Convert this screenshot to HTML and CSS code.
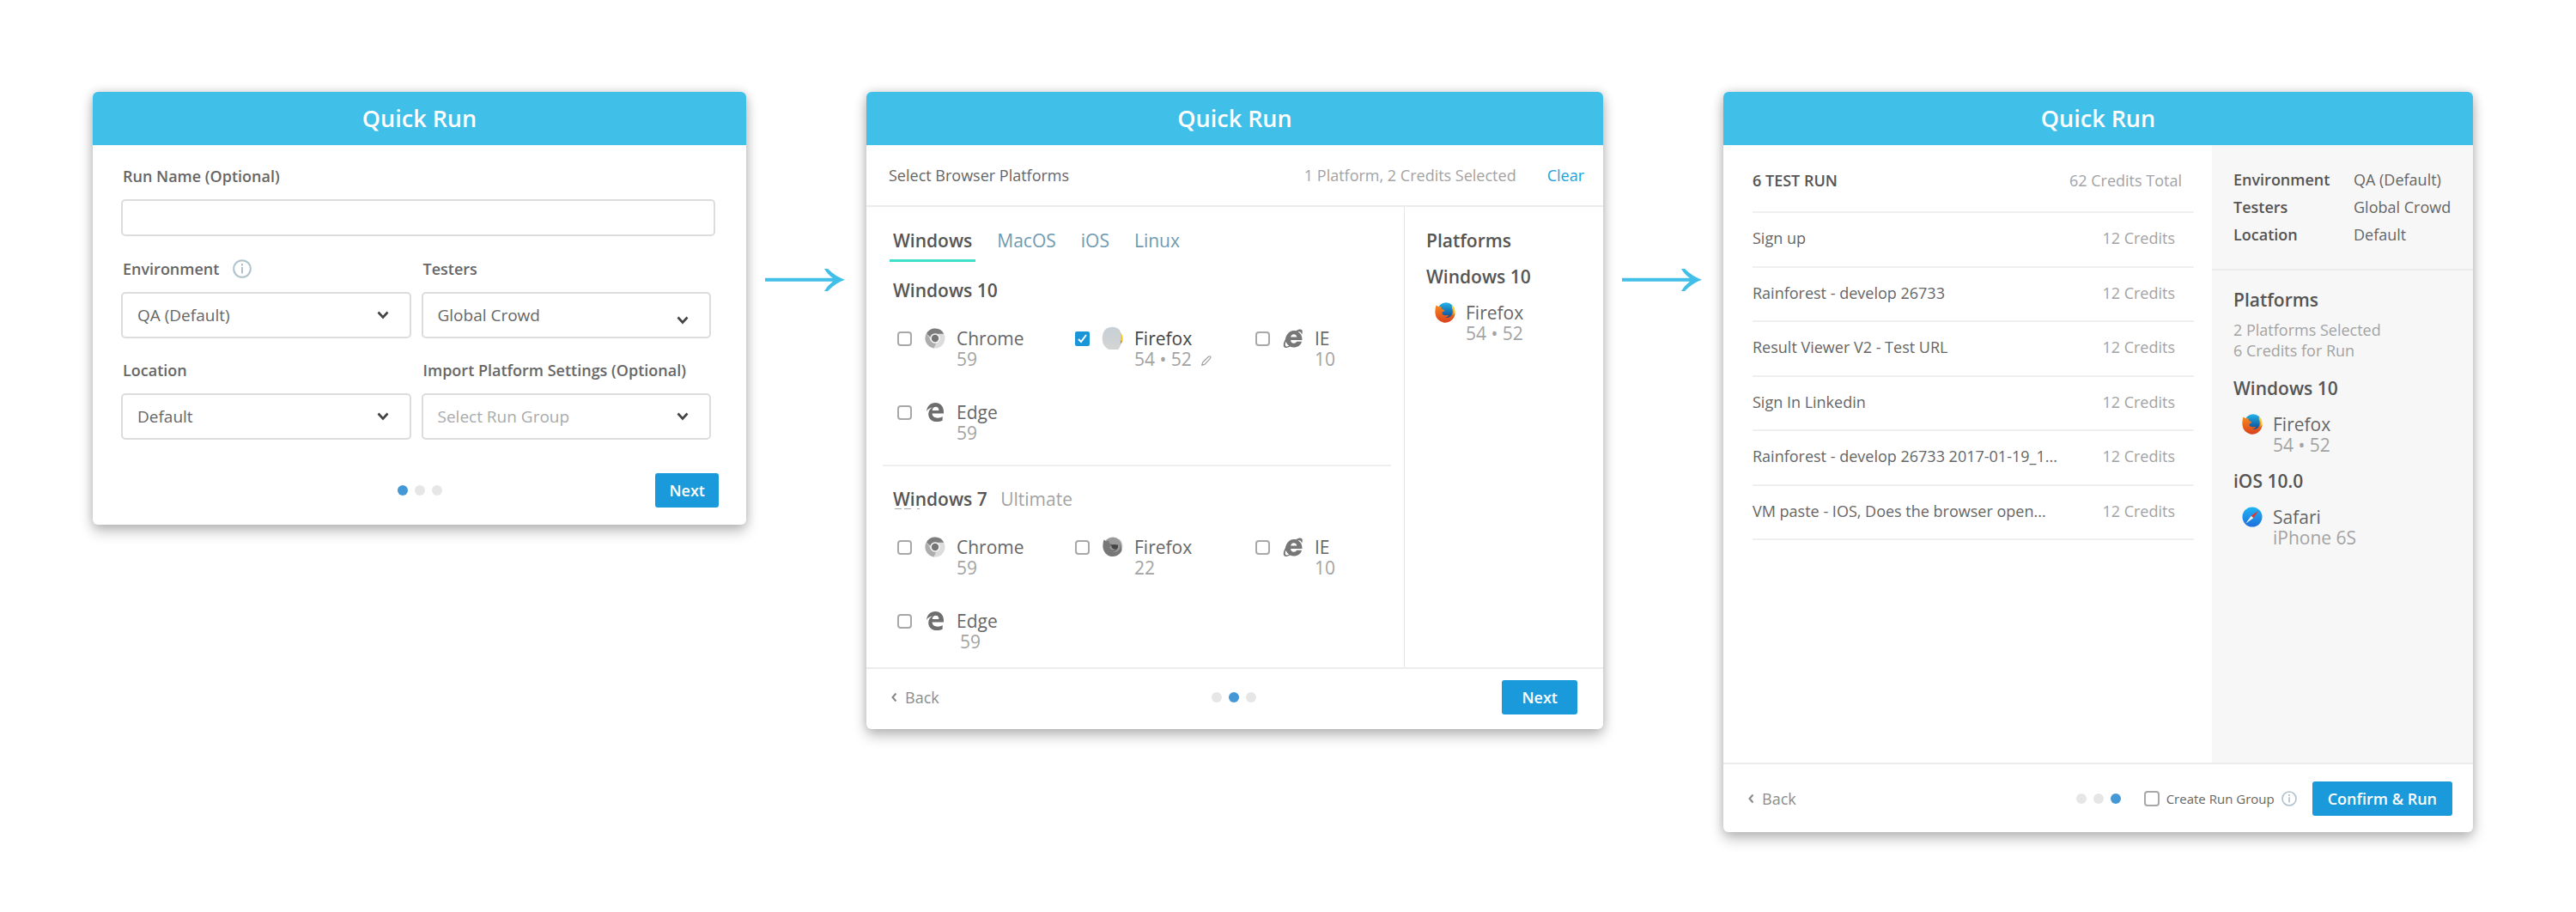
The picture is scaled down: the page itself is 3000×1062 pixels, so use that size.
FILE: index.html
```html
<!DOCTYPE html>
<html lang="en">
<head>
<meta charset="utf-8">
<title>Quick Run</title>
<link rel="stylesheet" href="styles.css">
</head>
<body>
<svg class="sprite" aria-hidden="true">
  <defs>
    <linearGradient id="globe" x1="0" y1="0" x2="0" y2="1"><stop offset="0" stop-color="#23b3ea"/><stop offset="1" stop-color="#0b3f8c"/></linearGradient>
    <linearGradient id="fur" x1="0" y1="0" x2="0" y2="1"><stop offset="0" stop-color="#f68a1e"/><stop offset="1" stop-color="#d9401c"/></linearGradient>
    <linearGradient id="sky" x1="0" y1="0" x2="0" y2="1"><stop offset="0" stop-color="#1fb4f4"/><stop offset="1" stop-color="#1d6fdc"/></linearGradient>
    <linearGradient id="mist" x1="0" y1="0" x2="0" y2="1"><stop offset="0" stop-color="#c6d0d6"/><stop offset="1" stop-color="#d4d4d4"/></linearGradient>
    <symbol id="chrome" viewBox="0 0 24 24">
      <circle cx="12" cy="12" r="11.500" fill="#dcdcdc"/>
      <path d="M2 6.300A11.500 11.500 0 0 1 22.200 6.700H12A5.500 5.500 0 0 0 6.600 11z" fill="#7d7d7d"/>
      <path d="M2 6.300 7.200 14.600a5.500 5.500 0 0 0 6 2.800L10.500 23.400A11.500 11.500 0 0 1 2 6.300z" fill="#adadad"/>
      <circle cx="12" cy="12" r="5.800" fill="#f6f6f6"/>
      <circle cx="12" cy="12" r="4.200" fill="#757575"/>
    </symbol>
    <symbol id="edge" viewBox="0 0 24 24">
      <path d="M2 10.900C2.700 4.800 6.700 1 12.300 1 18.300 1 22 5.300 22 11.300v2.300H8.600c.1 3.700 3.200 5.100 6.400 5.100 2.200 0 4-.6 5.700-1.600v4.500c-1.900 1-4.100 1.500-6.700 1.500-6 0-9.800-3.600-9.800-8.800 0-3.700 1.900-6.500 5-8.100C5.800 7 3.400 8.500 2 10.900zM8.700 10h7.700c0-2.800-1.400-4.200-3.700-4.200-2.300 0-3.800 1.600-4 4.200z" fill="#6e6e6e"/>
    </symbol>
    <symbol id="ie" viewBox="0 0 24 24">
      <path d="M22.500 13.900H9.100c.1 2.300 1.500 3.800 3.700 3.800 1.600 0 2.700-.7 3.300-2h6c-1.300 4.300-4.800 6.800-9.400 6.800-1.700 0-3.200-.3-4.500-1-3 1.700-5.500 2-6.700.7-1.400-1.600-.8-5 1.300-8.900C3.900 7.200 7.600 3 12.700 2.900c1 0 1.900.1 2.700.3C18 1.600 20.600.9 22 2.100c1.200 1.100 1 3.300 0 5.900-.2-2.500-1.600-4.300-4.400-3.600 3.300 1.700 5.100 5 4.900 9.500zM9.200 10.500h7.100c-.2-2-1.500-3.300-3.500-3.300s-3.400 1.300-3.600 3.300zM3.500 16c-1.100 2.600-1 4.700.2 5.200.8.400 2.100.1 3.500-.7A10 10 0 0 1 3.500 16z" fill="#777" fill-rule="evenodd"/>
    </symbol>
    <symbol id="firefox" viewBox="0 0 24 24">
      <path d="M19.500 3.500c3 2.500 4.500 6 4 10A12 12 0 0 1 20 20z" fill="#fbd22f"/>
      <circle cx="13" cy="10" r="9.800" fill="url(#globe)"/>
      <path d="M1.500 3.600 4.600 5.200 7 4.600 8.200 8l3.300 1-.8 1.600-2.500 1.400c.5 2.600 3 4 5.800 3l2.500.3c-1.500 1.700-3 2-4.500 2.200 4.600 1.200 8.600-1.600 8.500-6.800l-.8-4.500c3.200 2.600 4.300 6.200 3.300 9.900A11.600 11.600 0 0 1 .5 13C.2 9.500.6 6.500 1.500 3.600z" fill="url(#fur)"/>
      <path d="M20 6.500c2 2.700 2.300 6 1 9 1.800-1.600 2.700-4.300 2.200-7C22.700 6 21.500 4.300 19.500 3.200z" fill="#fbd22f"/>
    </symbol>
    <symbol id="firefox-gray" viewBox="0 0 24 24">
      <path d="M19.500 2.500c3 2.500 4.500 6 4 10A12 12 0 0 1 20 20z" fill="#d9d9d9"/>
      <circle cx="12" cy="11" r="10.500" fill="#9a9a9a"/>
      <path d="M1.500 3.600 4.600 5.200 7 4.600 8.200 8l3.300 1-.8 1.600-2.500 1.400c.5 2.600 3 4 5.800 3l2.500.3c-1.500 1.700-3 2-4.500 2.200 4.600 1.200 8.600-1.600 8.500-6.800l-.8-2.500c2.200 2.600 3.300 5.200 2.300 8.900A11.500 11.500 0 0 1 .5 13C.2 9.500.6 6.500 1.500 3.600z" fill="#777"/>
      <path d="M10 9.500c3-1 5-.5 8 0 .5 4-1 6-5 6.500l3-1.500c-3 0-5-.5-5.500-2.500z" fill="#454545"/>
    </symbol>
    <symbol id="firefox-mist" viewBox="0 0 28 28">
      <path d="M22 6c3 3 4.500 8 3 12l-3 4z" fill="#f7c61e"/>
      <path d="M23 16l1.500 1.500L22 23z" fill="#d9532c"/>
      <path d="M5 4C10-.5 18-.3 22 4.500 23.500 9 24 16 22.500 23l-2 4H9C4 24 1.500 20 1.800 13 2 9 3 6 5 4z" fill="url(#mist)"/>
    </symbol>
    <symbol id="safari" viewBox="0 0 24 24">
      <circle cx="12" cy="12" r="11.500" fill="url(#sky)"/>
      <path d="M19.500 4.500 10.700 10.700l2.600 2.600z" fill="#e8352b"/>
      <path d="M4.500 19.500 10.700 10.700l2.600 2.600z" fill="#eef3f8"/>
    </symbol>
    <symbol id="info" viewBox="0 0 22 22">
      <circle cx="11" cy="11" r="9.800" fill="none" stroke="#b0c3cd" stroke-width="2"/>
      <path d="M10 5h2v2.400h-2zM10 9h2v7.500h-2z" fill="#b0c3cd"/>
    </symbol>
    <symbol id="arrow" viewBox="0 0 96 28">
      <path d="M69 1h4q9 9 20 12.700Q82 17.500 73 27h-4q4-7 10-11.300H0v-4h79Q73 8 69 1z" fill="#41bfe8"/>
    </symbol>
    <symbol id="pencil" viewBox="0 0 12 12">
      <path d="M.8 11.200 1.600 8 8.500 1.200q1.200-.8 2 0t0 2.100L3.800 10.400z" fill="none" stroke="#a0a0a0" stroke-width="1.200"/>
    </symbol>
    <symbol id="back" viewBox="0 0 8 12">
      <path d="M6.500 1.500 2.500 6l4 4.500" fill="none" stroke="#888" stroke-width="2"/>
    </symbol>
  </defs>
</svg>

<main class="flow">
  <form class="card card-setup">
    <h2 class="card-title">Quick Run</h2>
    <div class="setup">
      <div class="field">
        <label class="label" for="run-name">Run Name (Optional)</label>
        <input class="text-input" id="run-name" type="text">
      </div>
      <div class="field-grid">
        <div class="field">
          <label class="label" for="env">Environment <svg class="info"><use href="#info"/></svg></label>
          <select class="select" id="env"><option>QA (Default)</option></select>
        </div>
        <div class="field">
          <label class="label" for="testers">Testers</label>
          <select class="select select-low" id="testers"><option>Global Crowd</option></select>
        </div>
        <div class="field">
          <label class="label" for="location">Location</label>
          <select class="select" id="location"><option>Default</option></select>
        </div>
        <div class="field">
          <label class="label" for="import">Import Platform Settings (Optional)</label>
          <select class="select select-empty" id="import"><option>Select Run Group</option></select>
        </div>
      </div>
    </div>
    <footer class="footer footer-plain">
      <div class="dots"><i class="dot dot-on"></i><i class="dot"></i><i class="dot"></i></div>
      <div class="footer-end"><button class="btn" type="button">Next</button></div>
    </footer>
  </form>

  <svg class="arrow"><use href="#arrow"/></svg>

  <form class="card card-platforms">
    <h2 class="card-title">Quick Run</h2>
    <div class="toolbar">
      <span class="toolbar-title">Select Browser Platforms</span>
      <span class="toolbar-count">1 Platform, 2 Credits Selected</span>
      <a class="clear" href="#">Clear</a>
    </div>
    <div class="picker">
      <div class="picker-main">
        <nav class="tabs">
          <a class="tab tab-on" href="#">Windows</a>
          <a class="tab" href="#">MacOS</a>
          <a class="tab" href="#">iOS</a>
          <a class="tab" href="#">Linux</a>
        </nav>
        <section class="os">
          <h3 class="os-title">Windows 10</h3>
          <div class="browsers">
            <label class="browser"><input class="check" type="checkbox"><svg class="logo"><use href="#chrome"/></svg><span class="name">Chrome</span><span class="version">59</span></label>
            <label class="browser"><input class="check" type="checkbox" checked><svg class="logo logo-lg"><use href="#firefox-mist"/></svg><span class="name name-on">Firefox</span><span class="version">54 • 52 <svg class="pencil"><use href="#pencil"/></svg></span></label>
            <label class="browser"><input class="check" type="checkbox"><svg class="logo"><use href="#ie"/></svg><span class="name">IE</span><span class="version">10</span></label>
            <label class="browser"><input class="check" type="checkbox"><svg class="logo"><use href="#edge"/></svg><span class="name">Edge</span><span class="version">59</span></label>
          </div>
        </section>
        <section class="os">
          <h3 class="os-title"><span class="dashed">Windows 7</span> <span class="edition">Ultimate</span></h3>
          <div class="browsers">
            <label class="browser"><input class="check" type="checkbox"><svg class="logo"><use href="#chrome"/></svg><span class="name">Chrome</span><span class="version">59</span></label>
            <label class="browser"><input class="check" type="checkbox"><svg class="logo"><use href="#firefox-gray"/></svg><span class="name">Firefox</span><span class="version">22</span></label>
            <label class="browser"><input class="check" type="checkbox"><svg class="logo"><use href="#ie"/></svg><span class="name">IE</span><span class="version">10</span></label>
            <label class="browser"><input class="check" type="checkbox"><svg class="logo"><use href="#edge"/></svg><span class="name">Edge</span><span class="version version-in">59</span></label>
          </div>
        </section>
      </div>
      <aside class="picker-side">
        <h3 class="side-title">Platforms</h3>
        <h4 class="side-os">Windows 10</h4>
        <div class="chosen"><svg class="logo"><use href="#firefox"/></svg><span class="name">Firefox</span><span class="version">54 • 52</span></div>
      </aside>
    </div>
    <footer class="footer">
      <a class="back" href="#"><svg class="back-icon"><use href="#back"/></svg>Back</a>
      <div class="dots"><i class="dot"></i><i class="dot dot-on"></i><i class="dot"></i></div>
      <div class="footer-end"><button class="btn btn-wide" type="button">Next</button></div>
    </footer>
  </form>

  <svg class="arrow"><use href="#arrow"/></svg>

  <form class="card card-confirm">
    <h2 class="card-title">Quick Run</h2>
    <div class="summary">
      <div class="tests">
        <table class="table">
          <thead><tr><th class="tests-head">6 TEST RUN</th><th class="total">62 Credits Total</th></tr></thead>
          <tbody>
            <tr><td>Sign up</td><td class="credits">12 Credits</td></tr>
            <tr><td>Rainforest - develop 26733</td><td class="credits">12 Credits</td></tr>
            <tr><td>Result Viewer V2 - Test URL</td><td class="credits">12 Credits</td></tr>
            <tr><td>Sign In Linkedin</td><td class="credits">12 Credits</td></tr>
            <tr><td>Rainforest - develop 26733 2017-01-19_1...</td><td class="credits">12 Credits</td></tr>
            <tr><td>VM paste - IOS, Does the browser open...</td><td class="credits">12 Credits</td></tr>
          </tbody>
        </table>
      </div>
      <aside class="summary-side">
        <dl class="facts">
          <dt>Environment</dt><dd>QA (Default)</dd>
          <dt>Testers</dt><dd>Global Crowd</dd>
          <dt>Location</dt><dd>Default</dd>
        </dl>
        <div class="chosen-list">
          <h3 class="side-title">Platforms</h3>
          <p class="note">2 Platforms Selected<br>6 Credits for Run</p>
          <h4 class="side-os">Windows 10</h4>
          <div class="chosen"><svg class="logo"><use href="#firefox"/></svg><span class="name">Firefox</span><span class="version">54 • 52</span></div>
          <h4 class="side-os">iOS 10.0</h4>
          <div class="chosen"><svg class="logo"><use href="#safari"/></svg><span class="name">Safari</span><span class="version">iPhone 6S</span></div>
        </div>
      </aside>
    </div>
    <footer class="footer footer-tall">
      <a class="back" href="#"><svg class="back-icon"><use href="#back"/></svg>Back</a>
      <div class="dots"><i class="dot"></i><i class="dot"></i><i class="dot dot-on"></i></div>
      <div class="footer-end">
        <label class="group"><input class="check check-lg" type="checkbox">Create Run Group <svg class="info info-sm"><use href="#info"/></svg></label>
        <button class="btn btn-run" type="button">Confirm &amp; Run</button>
      </div>
    </footer>
  </form>
</main>
</body>
</html>
```
FILE: styles.css
```css
* { box-sizing: border-box; }

body {
  margin: 0;
  background: #fff;
  color: #666;
  font-family: "Open Sans", "Noto Sans", sans-serif;
  font-size: 18px;
  line-height: 24px;
}

h2, h3, h4, p, dl, dd { margin: 0; }
a { text-decoration: none; }
button, input, select { font: inherit; }

.sprite { position: absolute; width: 0; height: 0; }

.flow {
  display: flex;
  align-items: flex-start;
  padding: 107px 120px 92px 108px;
}

.card {
  min-width: 0;
  background: #fff;
  border-radius: 6px;
  box-shadow: 0 8px 16px rgba(0, 0, 0, .24), 0 0 12px rgba(0, 0, 0, .16);
}
.card-setup { flex: 761 1 0; }
.card-platforms { flex: 858 1 0; }
.card-confirm { flex: 873 1 0; }

.card-title {
  height: 62px;
  border-radius: 6px 6px 0 0;
  background: #40bfe8;
  color: #fff;
  font-size: 27px;
  font-weight: 600;
  line-height: 62px;
  text-align: center;
}

.arrow {
  flex: none;
  width: 96px;
  height: 28px;
  margin: 205px 22px 0;
}

/* Step 1 */
.setup { padding: 24px 36px 0 33px; }
.field { display: flex; flex-direction: column; }
.label {
  display: flex;
  align-items: center;
  gap: 16px;
  padding-left: 2px;
  font-size: 18px;
  font-weight: 600;
}
.text-input {
  height: 43px;
  margin-top: 15px;
  border: 2px solid #dcdcdc;
  border-radius: 5px;
  background: #fff;
}
.field-grid {
  display: grid;
  grid-template-columns: 1fr 1fr;
  gap: 25px 12px;
  margin-top: 26px;
  padding-right: 5px;
}
.select {
  height: 54px;
  margin-top: 15px;
  padding: 0 17px;
  border: 2px solid #dcdcdc;
  border-radius: 5px;
  appearance: none;
  background: #fff url("data:image/svg+xml,%3Csvg xmlns='http://www.w3.org/2000/svg' width='14' height='10'%3E%3Cpath d='M1.500 1.500 7 7.500 12.500 1.500' fill='none' stroke='%23444' stroke-width='2.600'/%3E%3C/svg%3E") no-repeat right 24px top 20px;
  color: #666;
  font-size: 19px;
}
.select-low { background-position: right 24px top 26px; }
.select-empty { color: #aaa; }
.info { width: 22px; height: 22px; }
.info-sm { width: 18px; height: 18px; }

/* Shared footer */
.footer {
  display: grid;
  grid-template-columns: 1fr auto 1fr;
  align-items: center;
  padding: 13px 30px 17px 28px;
  border-top: 2px solid #ececec;
}
.footer-plain { padding: 39px 32px 20px; border-top: 0; }
.footer-tall { padding: 20px 24px 19px; }
.footer-tall .back { padding-left: 4px; }
.footer-end { display: flex; justify-content: flex-end; gap: 18px; grid-column: 3; }
.dots { display: flex; gap: 8px; grid-column: 2; }
.dot { width: 12px; height: 12px; border-radius: 50%; background: #e6e6e6; }
.dot-on { background: #4598d6; }
.back { display: flex; align-items: center; gap: 9px; color: #8c8c8c; }
.back-icon { width: 8px; height: 12px; }
.btn {
  height: 40px;
  padding: 0 16px;
  border: 0;
  border-radius: 3px;
  background: #1a9adb;
  color: #fff;
  font-size: 18px;
  font-weight: 600;
}
.btn-wide { padding: 0 23px; }
.btn-run { padding: 0 18px; }

/* Step 2 */
.toolbar {
  display: flex;
  align-items: center;
  height: 72px;
  padding: 0 22px 0 26px;
  border-bottom: 2px solid #ececec;
}
.toolbar-count { margin-left: auto; color: #a3a3a3; }
.clear { margin-left: 36px; color: #1aa3e0; }
.picker { display: flex; }
.picker-main { flex: 1; padding: 24px 15px 5px 19px; }
.picker-side { flex: 0 0 232px; padding: 27px 25px; border-left: 1px solid #e6e6e6; }
.tabs { display: flex; gap: 21px; padding-left: 8px; }
.tab { padding: 3px 4px 10px; color: #6f9ab0; font-size: 21px; }
.tab-on { border-bottom: 3px solid #3ee0cb; color: #555; font-weight: 600; }
.os { padding: 21px 12px 25px; }
.os + .os { padding: 26px 12px 13px; border-top: 2px solid #efefef; }
.os-title { color: #555; font-size: 21px; font-weight: 600; }
.dashed {
  display: inline-block;
  background:
    linear-gradient(#aaa, #aaa) 2px 23px / 8px 1px no-repeat,
    linear-gradient(#aaa, #aaa) 13px 23px / 8px 1px no-repeat,
    linear-gradient(#aaa, #aaa) 28px 23px / 3px 1px no-repeat;
}
.edition { margin-left: 10px; color: #a3a3a3; font-weight: 400; }
.browsers {
  display: grid;
  grid-template-columns: 207px 210px 1fr;
  row-gap: 38px;
  padding: 32px 5px 0;
}
.browser, .chosen {
  display: grid;
  align-items: center;
  justify-content: start;
  font-size: 21px;
}
.browser { grid-template-columns: 32px 37px auto; }
.chosen { grid-template-columns: 36px auto; margin-top: 18px; padding-left: 10px; }
.name { color: #666; }
.name-on { color: #444; }
.version { grid-column: -2; color: #a3a3a3; }
.version-in { padding-left: 4px; }
.logo { width: 24px; height: 24px; }
.logo-lg { width: 28px; height: 28px; margin: -2px; }
.pencil { width: 12px; height: 12px; margin-left: 6px; }
.check {
  width: 17px;
  height: 17px;
  margin: 0;
  border: 2px solid #a8a8a8;
  border-radius: 4px;
  appearance: none;
  background: #fff;
}
.check:checked {
  border-color: #1a96d8;
  border-radius: 2px;
  background: #1a96d8 url("data:image/svg+xml,%3Csvg xmlns='http://www.w3.org/2000/svg' width='13' height='13'%3E%3Cpath d='M2 7 5 10 11 2' fill='none' stroke='white' stroke-width='2'/%3E%3C/svg%3E") no-repeat center;
}
.side-title, .side-os { color: #555; font-size: 21px; font-weight: 600; }
.side-os { margin-top: 18px; }

/* Step 3 */
.summary { display: flex; min-height: 719px; }
.tests { flex: 1; padding: 14px 21px 0 34px; }
.summary-side { flex: 0 0 304px; background: #f7f7f7; }
.table { width: 100%; border-collapse: collapse; }
.table th, .table td { height: 64px; padding: 0 0 4px; border-bottom: 2px solid #efefef; text-align: left; }
.table th { padding-bottom: 10px; }
.table tr:nth-child(even) td { height: 63px; }
.tests-head { color: #555; font-weight: 600; }
.table .total { padding-right: 14px; color: #a3a3a3; font-weight: 400; text-align: right; }
.table .credits { padding-right: 22px; color: #a3a3a3; text-align: right; }
.facts {
  display: grid;
  grid-template-columns: 140px auto;
  row-gap: 8px;
  padding: 28px 0 28px 25px;
  border-bottom: 2px solid #ececec;
}
.facts dt { color: #555; font-weight: 600; }
.chosen-list { padding: 22px 25px; }
.note { margin: 11px 0 20px; color: #a3a3a3; }
.group { display: flex; align-items: center; gap: 8px; font-size: 15px; }
.check-lg { width: 18px; height: 18px; }
```
